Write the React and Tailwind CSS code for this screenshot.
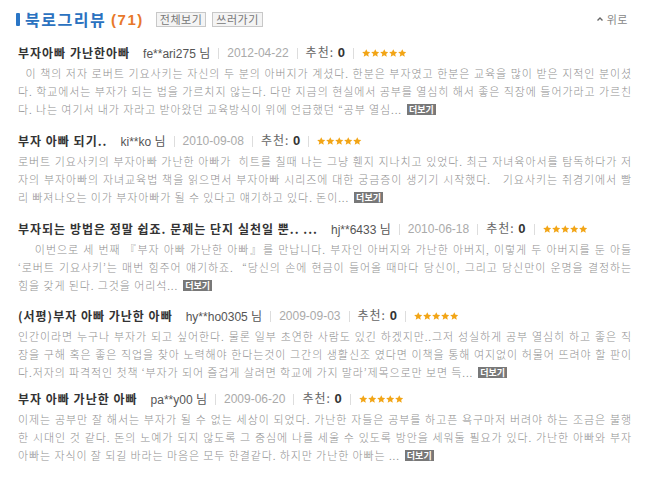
import React from "react";

const Star = () => (
  <svg width="8.5" height="8.5" viewBox="0 0 10 10" className="block">
    <path d="M5 0.2l1.45 3.05 3.35.35-2.55 2.25.75 3.3L5 7.4 2 9.15l.75-3.3L.2 3.6l3.35-.35z" fill="#f2a516" />
  </svg>
);

const Stars = () => (
  <span className="flex items-center gap-[0.5px]">
    <Star />
    <Star />
    <Star />
    <Star />
    <Star />
  </span>
);

const Sep = () => <span className="mx-[8px] inline-block h-[11px] w-px bg-[#dddddd]" />;

const More = () => (
  <span className="ml-[5px] inline-flex h-[11px] items-center bg-[#787878] px-[2px] align-[1px] text-[9px] leading-none font-bold tracking-normal text-white">
    더보기
  </span>
);

const reviews = [
  {
    title: "부자아빠 가난한아빠",
    user: "fe**ari275",
    date: "2012-04-22",
    lines: [
      "\u00a0 이 책의 저자 로버트 기요사키는 자신의 두 분의 아버지가 계셨다. 한분은 부자였고 한분은 교육을 많이 받은 지적인 분이셨",
      "다. 학교에서는 부자가 되는 법을 가르치지 않는다. 다만 지금의 현실에서 공부를 열심히 해서 좋은 직장에 들어가라고 가르친",
    ],
    last: "다. 나는 여기서 내가 자라고 받아왔던 교육방식이 위에 언급했던 “공부 열심...",
    mb: "mb-[12px]",
  },
  {
    title: "부자 아빠 되기..",
    user: "ki**ko",
    date: "2010-09-08",
    lines: [
      "로버트 기요사키의 부자아빠 가난한 아빠가 \u00a0히트를 칠때 나는 그냥 휀지 지나치고 있었다. 최근 자녀육아서를 탐독하다가 저",
      "자의 부자아빠의 자녀교육법 책을 읽으면서 부자아빠 시리즈에 대한 궁금증이 생기기 시작했다. \u00a0 기요사키는 쥐경기에서 빨",
    ],
    last: "리 빠져나오는 이가 부자아빠가 될 수 있다고 얘기하고 있다. 돈이...",
    mb: "mb-[12px]",
  },
  {
    title: "부자되는 방법은 정말 쉽죠. 문제는 단지 실천일 뿐.. ...",
    user: "hj**6433",
    date: "2010-06-18",
    lines: [
      "\u00a0 \u00a0 이번으로 세 번째 『부자 아빠 가난한 아빠』를 만납니다. 부자인 아버지와 가난한 아버지, 이렇게 두 아버지를 둔 아들",
      "‘로버트 기요사키’는 매번 힘주어 얘기하죠. \u00a0“당신의 손에 현금이 들어올 때마다 당신이, 그리고 당신만이 운명을 결정하는",
    ],
    last: "힘을 갖게 된다. 그것을 어리석...",
    mb: "mb-[11px]",
  },
  {
    title: "(서평)부자 아빠 가난한 아빠",
    user: "hy**ho0305",
    date: "2009-09-03",
    lines: [
      "인간이라면 누구나 부자가 되고 싶어한다. 물론 일부 초연한 사람도 있긴 하겠지만..그저 성실하게 공부 열심히 하고 좋은 직",
      "장을 구해 혹은 좋은 직업을 찾아 노력해야 한다는것이 그간의 생활신조 였다면 이책을 통해 여지없이 허물어 뜨려야 할 판이",
    ],
    last: "다.저자의 파격적인 첫책 ‘부자가 되어 즐겁게 살려면 학교에 가지 말라’제목으로만 보면 득...",
    mb: "mb-[7px]",
  },
  {
    title: "부자 아빠 가난한 아빠",
    user: "pa**y00",
    date: "2009-06-20",
    lines: [
      "이제는 공부만 잘 해서는 부자가 될 수 없는 세상이 되었다. 가난한 자들은 공부를 하고픈 욕구마저 버려야 하는 조금은 불행",
      "한 시대인 것 같다. 돈의 노예가 되지 않도록 그 중심에 나를 세울 수 있도록 방안을 세워둘 필요가 있다. 가난한 아빠와 부자",
    ],
    last: "아빠는 자식이 잘 되길 바라는 마음은 모두 한결같다. 하지만 가난한 아빠는 ...",
    mb: "mb-0",
  },
];

export default function App() {
  return (
    <div className="h-[494px] w-[652px] overflow-hidden bg-white font-['Liberation_Sans','Noto_Sans_CJK_KR',sans-serif]">
      {/* header */}
      <div className="flex h-[38px] items-center pl-[16px] pr-[24px]">
        <span className="h-[13px] w-[4px] rounded-[1px] bg-[#2a76c6]" />
        <span className="ml-[5px] font-['Noto_Sans_CJK_KR',sans-serif] text-[16px] leading-none font-bold tracking-[1.5px] text-[#2b72c0]">
          북로그리뷰
        </span>
        <span className="ml-[5px] text-[15px] leading-none font-bold tracking-[1.5px] text-[#e8782a]">(71)</span>
        <span className="ml-[12px] flex h-[15px] items-center border border-[#c8c8c8] bg-[#f4f4f4] px-[3px] font-['Noto_Sans_CJK_KR',sans-serif] text-[11px] leading-none tracking-[0.5px] text-[#777]">
          전체보기
        </span>
        <span className="ml-[6px] flex h-[15px] items-center border border-[#c8c8c8] bg-[#f4f4f4] px-[3px] font-['Noto_Sans_CJK_KR',sans-serif] text-[11px] leading-none tracking-[0.5px] text-[#777]">
          쓰러가기
        </span>
        <span className="ml-auto flex items-center gap-[4px] font-['Noto_Sans_CJK_KR',sans-serif] text-[11px] leading-none tracking-[0.5px] text-[#888]">
          <svg width="6" height="4" viewBox="0 0 6 4">
            <path d="M0.5 3.5L3 1l2.5 2.5" stroke="#666" strokeWidth="1.4" fill="none" />
          </svg>
          위로
        </span>
      </div>

      {/* reviews */}
      <div className="pt-[4px] pl-[18px]">
        {reviews.map((r, i) => (
          <div key={i} className={r.mb}>
            <div className="flex h-[22px] items-center whitespace-nowrap">
              <span className="font-['Noto_Sans_CJK_KR',sans-serif] text-[12px] font-bold tracking-[1px] text-[#333]">{r.title}</span>
              <span className="ml-[13px] text-[12px] text-[#555]">
                {r.user} <span className="font-['Noto_Sans_CJK_KR',sans-serif]">님</span>
              </span>
              <Sep />
              <span className="text-[12px] text-[#aaa]">{r.date}</span>
              <Sep />
              <span className="font-['Noto_Sans_CJK_KR',sans-serif] text-[12px] tracking-[1px] text-[#666]">
                추천: <span className="font-['Liberation_Sans',sans-serif] text-[13px] font-bold tracking-normal text-[#333]">0</span>
              </span>
              <Sep />
              <Stars />
            </div>
            <div className="w-[614px] font-['Noto_Sans_CJK_KR',sans-serif] text-[11px] leading-[18px] font-light tracking-[0.9px] text-[#8f8f8f]">
              {r.lines.map((l, j) => (
                <div key={j} className="text-justify [text-align-last:justify]">
                  {l}
                </div>
              ))}
              <div>
                {r.last}
                <More />
              </div>
            </div>
          </div>
        ))}
      </div>
    </div>
  );
}
